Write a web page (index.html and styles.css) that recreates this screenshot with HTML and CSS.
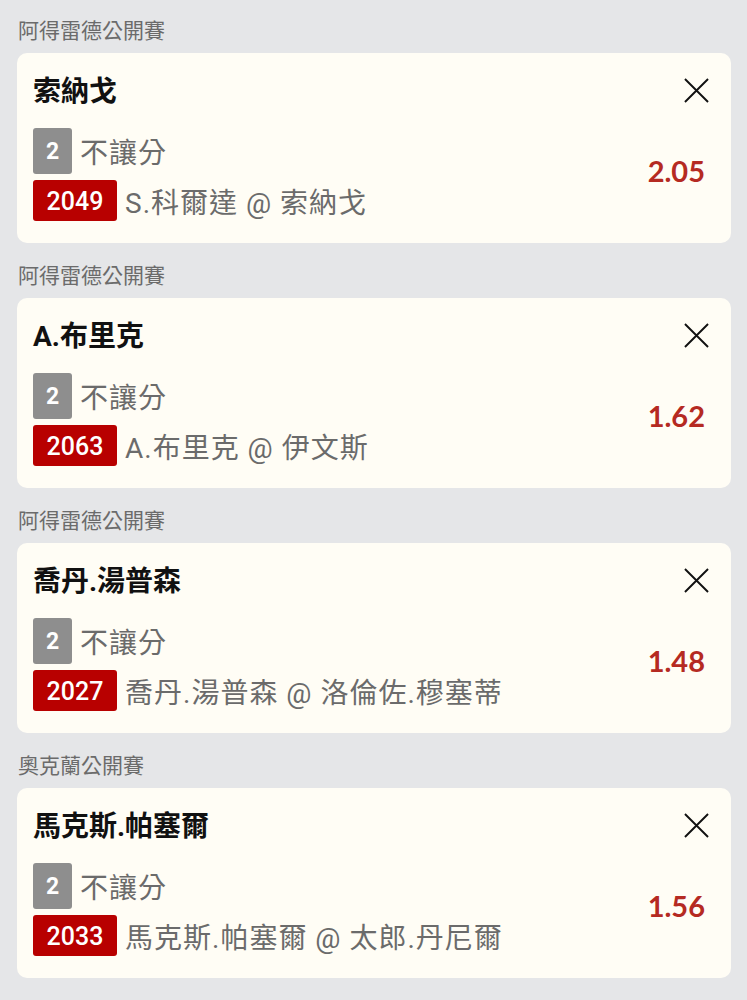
FILE: index.html
```html
<!DOCTYPE html>
<html lang="zh-Hant">
<head>
    <meta charset="UTF-8">
    <title>投注單</title>
    <link rel="stylesheet" href="styles.css">
</head>
<body>
    <div class="bet-list">
        <div class="bet-group">
            <div class="league">阿得雷德公開賽</div>
            <div class="bet-card">
                <div class="bet-head">
                    <div class="pick">索納戈</div>
                    <svg class="close" viewBox="0 0 26 26"><path d="M1 1L25 25M25 1L1 25"/></svg>
                </div>
                <div class="bet-body">
                    <div class="bet-info">
                        <div class="row"><span class="tag tag-grey">2</span><span class="desc">不讓分</span></div>
                        <div class="row"><span class="tag tag-red">2049</span><span class="desc">S.科爾達 @ 索納戈</span></div>
                    </div>
                    <div class="odds">2.05</div>
                </div>
            </div>
        </div>

        <div class="bet-group">
            <div class="league">阿得雷德公開賽</div>
            <div class="bet-card">
                <div class="bet-head">
                    <div class="pick">A.布里克</div>
                    <svg class="close" viewBox="0 0 26 26"><path d="M1 1L25 25M25 1L1 25"/></svg>
                </div>
                <div class="bet-body">
                    <div class="bet-info">
                        <div class="row"><span class="tag tag-grey">2</span><span class="desc">不讓分</span></div>
                        <div class="row"><span class="tag tag-red">2063</span><span class="desc">A.布里克 @ 伊文斯</span></div>
                    </div>
                    <div class="odds">1.62</div>
                </div>
            </div>
        </div>

        <div class="bet-group">
            <div class="league">阿得雷德公開賽</div>
            <div class="bet-card">
                <div class="bet-head">
                    <div class="pick">喬丹.湯普森</div>
                    <svg class="close" viewBox="0 0 26 26"><path d="M1 1L25 25M25 1L1 25"/></svg>
                </div>
                <div class="bet-body">
                    <div class="bet-info">
                        <div class="row"><span class="tag tag-grey">2</span><span class="desc">不讓分</span></div>
                        <div class="row"><span class="tag tag-red">2027</span><span class="desc">喬丹.湯普森 @ 洛倫佐.穆塞蒂</span></div>
                    </div>
                    <div class="odds">1.48</div>
                </div>
            </div>
        </div>

        <div class="bet-group">
            <div class="league">奧克蘭公開賽</div>
            <div class="bet-card">
                <div class="bet-head">
                    <div class="pick">馬克斯.帕塞爾</div>
                    <svg class="close" viewBox="0 0 26 26"><path d="M1 1L25 25M25 1L1 25"/></svg>
                </div>
                <div class="bet-body">
                    <div class="bet-info">
                        <div class="row"><span class="tag tag-grey">2</span><span class="desc">不讓分</span></div>
                        <div class="row"><span class="tag tag-red">2033</span><span class="desc">馬克斯.帕塞爾 @ 太郎.丹尼爾</span></div>
                    </div>
                    <div class="odds">1.56</div>
                </div>
            </div>
        </div>
    </div>
</body>
</html>
```

FILE: styles.css
```css
body {
    margin: 0;
    background-color: #e5e6e8;
    font-family: Roboto, "Noto Sans CJK TC", sans-serif;
}
.bet-list {
    display: flex;
    flex-direction: column;
    gap: 11px;
    padding: 9px 16px 0 17px;
}
.league {
    height: 44px;
    line-height: 44px;
    padding-left: 1px;
    font-size: 21px;
    color: #6b6b6b;
}
.bet-card {
    background-color: #fffdf5;
    border-radius: 10px;
    padding: 18px 26px 22px 16px;
}
.bet-head {
    display: flex;
    justify-content: space-between;
    align-items: center;
    height: 36px;
}
.pick {
    font-size: 28px;
    font-weight: bold;
    color: #111;
    line-height: 36px;
    margin-top: 6px;
}
.close {
    width: 25px;
    height: 25px;
    margin-right: -4px;
    margin-top: 2px;
    fill: none;
    stroke: #111;
    stroke-width: 2;
}
.bet-body {
    display: flex;
    justify-content: space-between;
    align-items: center;
    margin-top: 21px;
}
.bet-info {
    display: flex;
    flex-direction: column;
    gap: 6px;
}
.row {
    display: flex;
    align-items: center;
    gap: 8px;
}
.tag {
    display: flex;
    align-items: center;
    justify-content: center;
    color: #fff;
    border-radius: 3px;
    font-weight: 500;
}
.tag-grey {
    width: 39px;
    height: 46px;
    background-color: #8e8e8e;
    font-size: 23px;
    font-weight: bold;
}
.tag-red {
    width: 84px;
    height: 41px;
    background-color: #b80000;
    font-size: 25px;
    padding-top: 2px;
    box-sizing: border-box;
}
.desc {
    font-size: 28px;
    color: #6b6b6b;
    letter-spacing: 1px;
}
.odds {
    font-family: Lato, sans-serif;
    font-size: 29px;
    font-weight: bold;
    color: #b52a22;
    margin-top: -8px;
}
```
